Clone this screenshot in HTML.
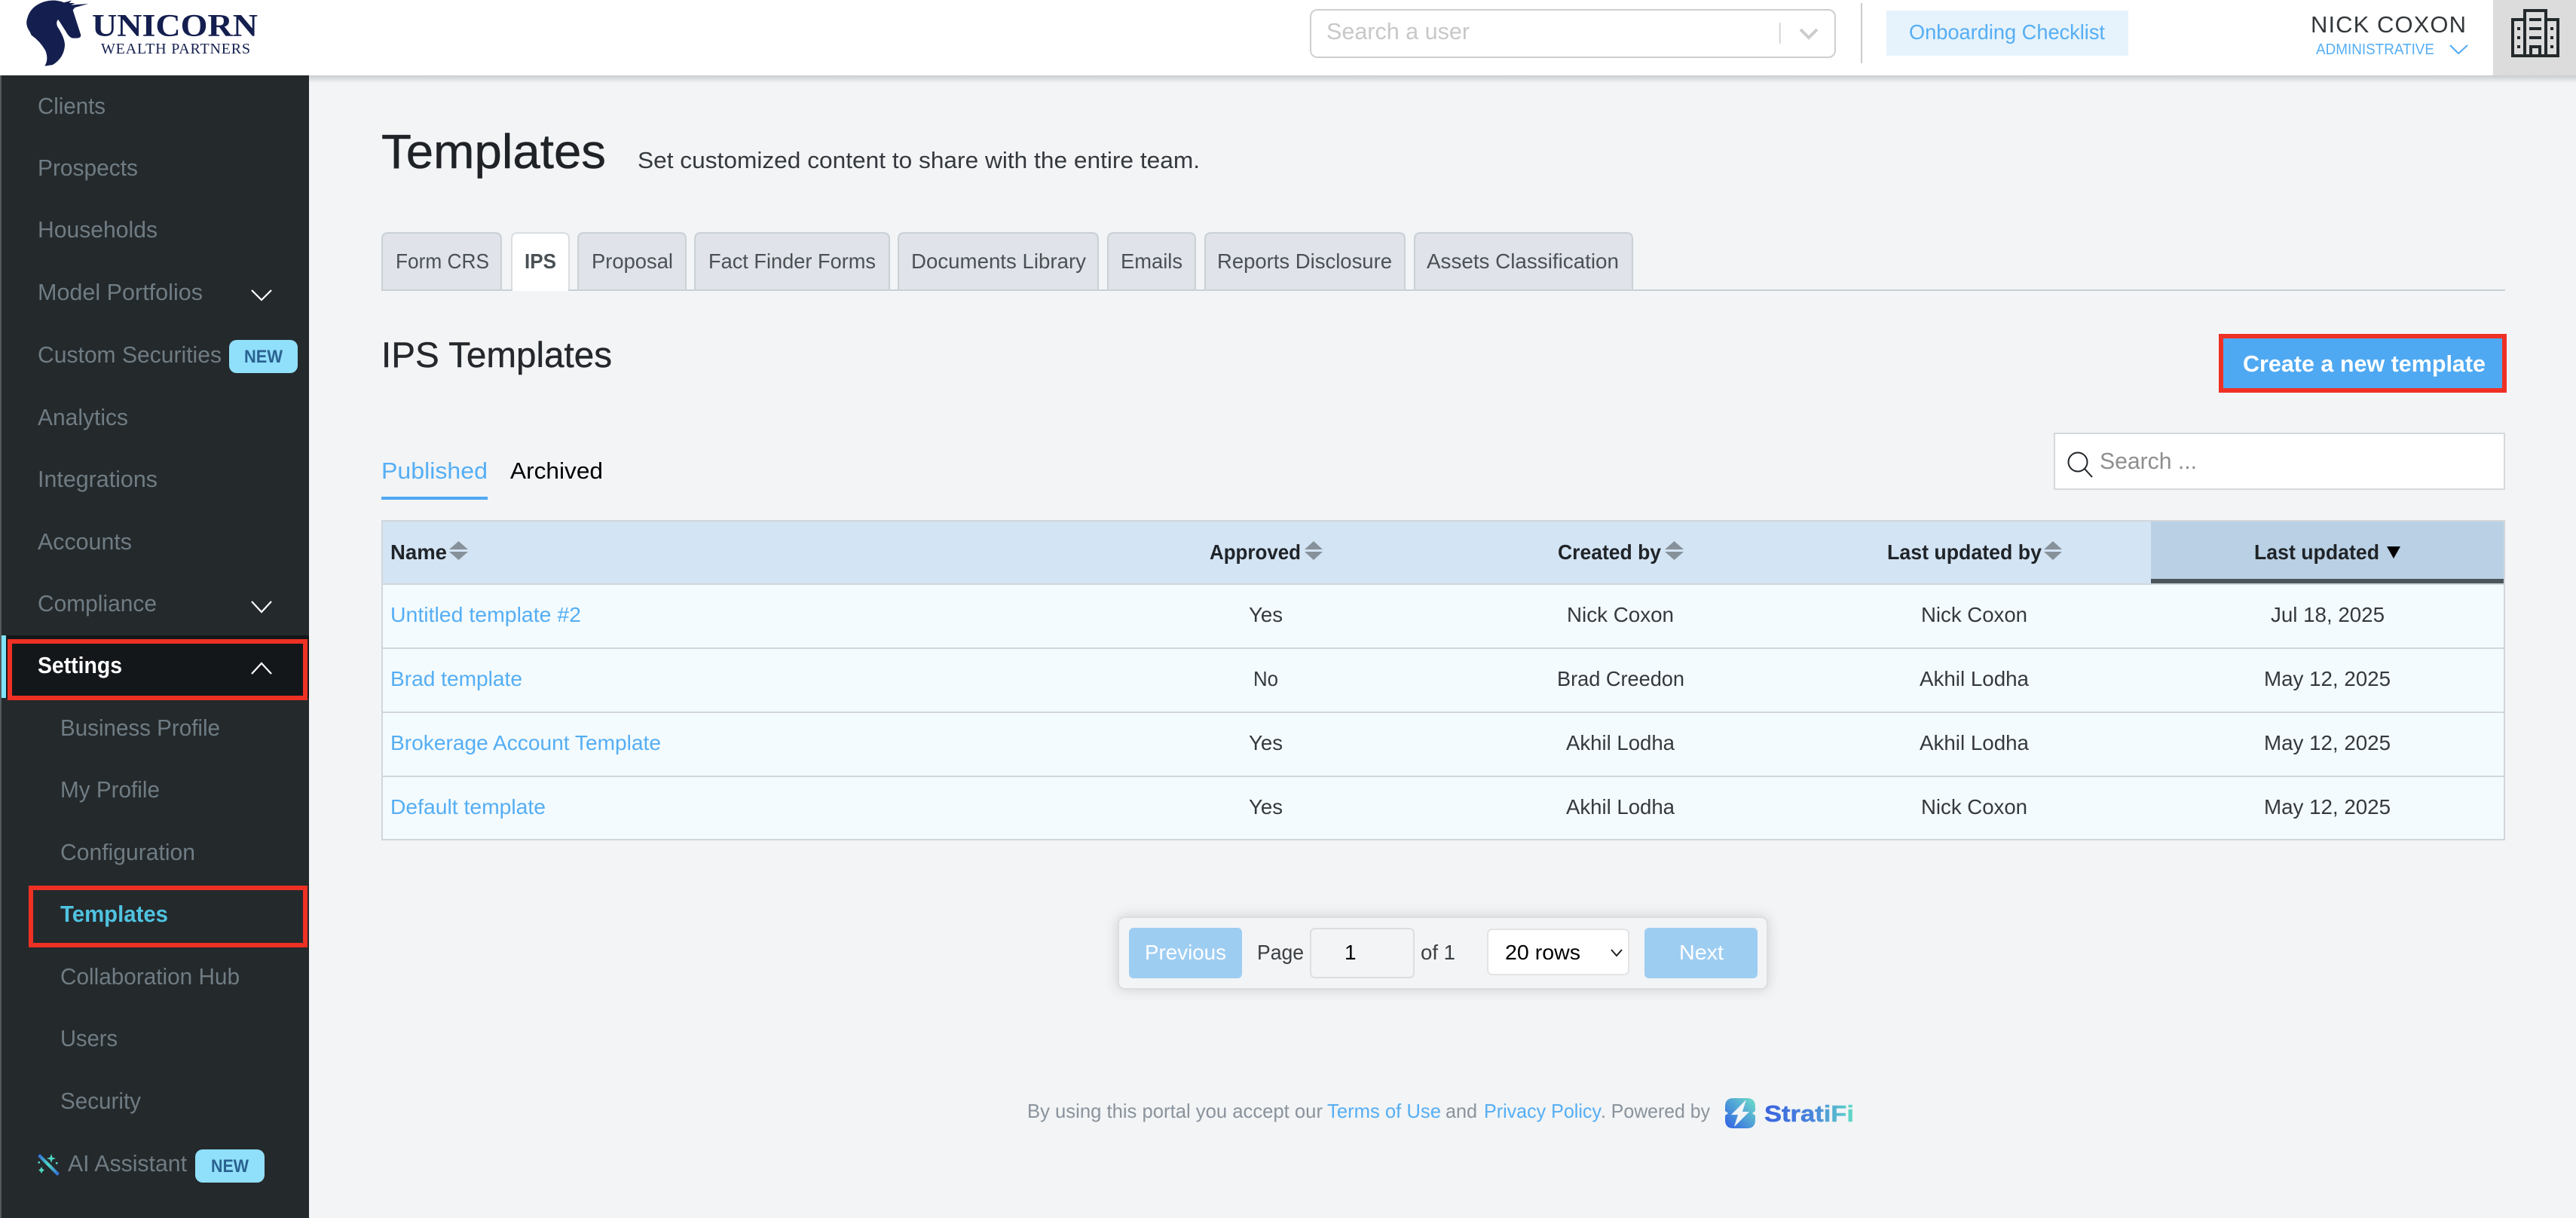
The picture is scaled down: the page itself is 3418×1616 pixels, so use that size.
<!DOCTYPE html>
<html lang="en"><head><meta charset="utf-8"><title>Templates</title>
<style>
html,body{margin:0;padding:0;background:#f2f4f6;width:3418px;height:1616px;overflow:hidden}
svg{display:block}
text{font-family:"Liberation Sans",Arial,sans-serif;white-space:pre}
.nav{font-size:31px;fill:#6f7c83}
.tab{font-size:28px;fill:#4a5155}
.th{font-size:28px;font-weight:700;fill:#202428}
.td{font-size:28px;fill:#35393d}
.lk{font-size:28px;fill:#55aef4}
.pg{font-size:28px}
.ft{font-size:26px;fill:#8a939c}
.ftl{font-size:26px;fill:#55aef4}
</style></head><body>
<svg xmlns="http://www.w3.org/2000/svg" width="3418" height="1616" viewBox="0 0 3418 1616">
<defs>
<linearGradient id="hs" x1="0" y1="0" x2="0" y2="1"><stop offset="0" stop-color="#c9cccf"/><stop offset="1" stop-color="#f2f4f6"/></linearGradient>
<linearGradient id="sf" x1="0" y1="1" x2="1" y2="0"><stop offset="0" stop-color="#2f5fe6"/><stop offset="1" stop-color="#6fe0c8"/></linearGradient>
<linearGradient id="sft" gradientUnits="userSpaceOnUse" x1="2341" y1="0" x2="2460" y2="0"><stop offset="0" stop-color="#3a62e0"/><stop offset=".55" stop-color="#4a86dc"/><stop offset="1" stop-color="#62dcc6"/></linearGradient>
<linearGradient id="wd" gradientUnits="userSpaceOnUse" x1="50" y1="1531" x2="79" y2="1559"><stop offset="0" stop-color="#2f62d8"/><stop offset=".5" stop-color="#4fd8c4"/><stop offset="1" stop-color="#2f62d8"/></linearGradient>
<filter id="ps" x="-5%" y="-40%" width="110%" height="180%"><feGaussianBlur stdDeviation="9"/></filter>
</defs>

<rect width="3418" height="1616" fill="#f2f4f6"/>

<!-- top bar shadow -->
<rect x="410" y="100" width="3008" height="10" fill="url(#hs)"/>

<!-- sidebar -->
<rect x="0" y="100" width="410" height="1516" fill="#24292c"/>
<rect x="0" y="100" width="2" height="1516" fill="#53595d"/>
<rect x="2" y="843" width="408" height="83" fill="#14171a"/>
<rect x="2" y="843" width="6" height="83" fill="#7fe3fb"/>

<text class="nav" x="50" y="151" textLength="90" lengthAdjust="spacingAndGlyphs">Clients</text>
<text class="nav" x="50" y="233" textLength="133" lengthAdjust="spacingAndGlyphs">Prospects</text>
<text class="nav" x="50" y="315" textLength="159" lengthAdjust="spacingAndGlyphs">Households</text>
<text class="nav" x="50" y="398" textLength="219" lengthAdjust="spacingAndGlyphs">Model Portfolios</text>
<text class="nav" x="50" y="481" textLength="244" lengthAdjust="spacingAndGlyphs">Custom Securities</text>
<text class="nav" x="50" y="564" textLength="120" lengthAdjust="spacingAndGlyphs">Analytics</text>
<text class="nav" x="50" y="646" textLength="159" lengthAdjust="spacingAndGlyphs">Integrations</text>
<text class="nav" x="50" y="729" textLength="125" lengthAdjust="spacingAndGlyphs">Accounts</text>
<text class="nav" x="50" y="811" textLength="158" lengthAdjust="spacingAndGlyphs">Compliance</text>
<text x="50" y="893" font-size="31" font-weight="700" fill="#fff" textLength="112" lengthAdjust="spacingAndGlyphs">Settings</text>
<text class="nav" x="80" y="976" textLength="212" lengthAdjust="spacingAndGlyphs">Business Profile</text>
<text class="nav" x="80" y="1058" textLength="132" lengthAdjust="spacingAndGlyphs">My Profile</text>
<text class="nav" x="80" y="1141" textLength="179" lengthAdjust="spacingAndGlyphs">Configuration</text>
<text x="80" y="1223" font-size="31" font-weight="700" fill="#4fc3e0" textLength="143" lengthAdjust="spacingAndGlyphs">Templates</text>
<text class="nav" x="80" y="1306" textLength="238" lengthAdjust="spacingAndGlyphs">Collaboration Hub</text>
<text class="nav" x="80" y="1388" textLength="76" lengthAdjust="spacingAndGlyphs">Users</text>
<text class="nav" x="80" y="1471" textLength="107" lengthAdjust="spacingAndGlyphs">Security</text>
<text class="nav" x="90" y="1554" textLength="158" lengthAdjust="spacingAndGlyphs">AI Assistant</text>

<!-- chevrons -->
<g fill="none" stroke="#fff" stroke-width="2.2">
<path d="M334 385 L347 398 L360 385"/>
<path d="M334 798 L347 812 L360 798"/>
<path d="M334 894 L347 880 L360 894"/>
</g>

<!-- badges -->
<rect x="304" y="451" width="91" height="44" rx="10" fill="#90dffb"/>
<text x="324" y="481" font-size="24" font-weight="700" fill="#2a6290" textLength="51" lengthAdjust="spacingAndGlyphs">NEW</text>
<rect x="259" y="1525" width="92" height="44" rx="10" fill="#90dffb"/>
<text x="280" y="1555" font-size="24" font-weight="700" fill="#2a6290" textLength="50" lengthAdjust="spacingAndGlyphs">NEW</text>

<!-- AI wand -->
<path d="M50 1534 L53 1531 L79 1557 L76 1560 Z" fill="url(#wd)"/>
<g fill="#4fd8c4">
<path d="M68 1531 L69.500 1535.500 L74 1537 L69.500 1538.500 L68 1543 L66.500 1538.500 L62 1537 L66.500 1535.500 Z"/>
<path d="M55 1548 L56.500 1551 L59 1552.500 L56.500 1554 L55 1557 L53.500 1554 L51 1552.500 L53.500 1551 Z"/>
<rect x="50.500" y="1541" width="2.500" height="2.500"/><rect x="74" y="1542" width="2.500" height="2.500"/>
</g>

<!-- red highlight boxes -->
<rect x="13" y="851" width="392" height="75" fill="none" stroke="#ee3124" stroke-width="6"/>
<rect x="41" y="1178" width="364" height="76" fill="none" stroke="#ee3124" stroke-width="6"/>

<!-- header -->
<rect x="0" y="0" width="3418" height="100" fill="#fff"/>
<g transform="scale(.33333)">
<path fill="#141f4f" d="M352 15 L298 30 L290 40 L322 140 Q322 152 305 152 L290 152 Q275 150 262 125 L232 78 Q222 85 228 105 Q258 150 258 180 Q255 230 210 258 L178 263 Q195 235 180 200 Q160 165 125 140 L118 125 Q100 100 108 75 Q120 25 175 7 Q215 -5 255 10 L285 2 L275 12 L298 12 L283 20 Z"/>
</g>
<text x="122" y="48" font-size="42" font-weight="700" fill="#141f4f" style="font-family:'Liberation Serif',serif" textLength="220" lengthAdjust="spacingAndGlyphs">UNICORN</text>
<text x="134" y="71" font-size="20" fill="#141f4f" style="font-family:'Liberation Serif',serif" textLength="198" lengthAdjust="spacing">WEALTH PARTNERS</text>

<rect x="1739" y="13" width="696" height="63" rx="9" fill="#fff" stroke="#cfcfcf" stroke-width="2"/>
<text x="1760" y="52" font-size="31" fill="#c8c8c8" textLength="190" lengthAdjust="spacingAndGlyphs">Search a user</text>
<rect x="2361" y="30" width="1.500" height="28" fill="#ccc"/>
<path d="M2389 39 L2400 50 L2411 39" fill="none" stroke="#ccc" stroke-width="4"/>
<rect x="2469" y="4" width="2" height="80" fill="#ccc"/>
<rect x="2503" y="14" width="321" height="60" fill="#e6f3fc"/>
<text x="2533" y="52" font-size="28" fill="#55aef4" textLength="260" lengthAdjust="spacingAndGlyphs">Onboarding Checklist</text>
<text x="3066" y="43" font-size="31" fill="#34383b" textLength="206" lengthAdjust="spacing">NICK COXON</text>
<text x="3073" y="72" font-size="20" fill="#55aef4" textLength="157" lengthAdjust="spacingAndGlyphs">ADMINISTRATIVE</text>
<path d="M3251 60 L3262 71 L3274 60" fill="none" stroke="#4fa9f2" stroke-width="2"/>

<rect x="3308" y="0" width="110" height="100" fill="#dcdcdc"/>
<g transform="translate(3310 0)" fill="#24292c">
<path fill-rule="evenodd" d="M38 12 H70 V24 H86 V76 H22 V24 H38 Z M42 16 V72 H46 V60 H62 V72 H66 V16 Z M26 28 V72 H38 V28 Z M70 28 V72 H82 V28 Z M50 64 V72 H58 V64 Z"/>
<rect x="46" y="24" width="16" height="4"/><rect x="46" y="36" width="16" height="4"/><rect x="46" y="48" width="16" height="4"/>
<rect x="30" y="36" width="4" height="4"/><rect x="30" y="48" width="4" height="4"/><rect x="30" y="60" width="4" height="4"/>
<rect x="74" y="36" width="4" height="4"/><rect x="74" y="48" width="4" height="4"/><rect x="74" y="60" width="4" height="4"/>
</g>

<!-- title -->
<text x="506" y="223" font-size="64" fill="#1f2327" stroke="#1f2327" stroke-width=".5" textLength="298" lengthAdjust="spacingAndGlyphs">Templates</text>
<text x="846" y="223" font-size="31" fill="#35393d" textLength="746" lengthAdjust="spacingAndGlyphs">Set customized content to share with the entire team.</text>

<!-- tabs -->
<g fill="#e0e3e9" stroke="#c9d1d5" stroke-width="2">
<path d="M507 385 V317 Q507 309 515 309 H657 Q665 309 665 317 V385"/>
<path fill="#fff" stroke="#d8dde0" d="M679 385 V317 Q679 309 687 309 H747 Q755 309 755 317 V385"/>
<path d="M767 385 V317 Q767 309 775 309 H902 Q910 309 910 317 V385"/>
<path d="M922 385 V317 Q922 309 930 309 H1172 Q1180 309 1180 317 V385"/>
<path d="M1192 385 V317 Q1192 309 1200 309 H1449 Q1457 309 1457 317 V385"/>
<path d="M1470 385 V317 Q1470 309 1478 309 H1578 Q1586 309 1586 317 V385"/>
<path d="M1599 385 V317 Q1599 309 1607 309 H1856 Q1864 309 1864 317 V385"/>
<path d="M1877 385 V317 Q1877 309 1885 309 H2158 Q2166 309 2166 317 V385"/>
</g>
<rect x="506" y="384" width="2818" height="2" fill="#c9d1d5"/>
<rect x="680" y="384" width="74" height="2" fill="#fff"/>
<text class="tab" x="525" y="356" textLength="124" lengthAdjust="spacingAndGlyphs">Form CRS</text>
<text class="tab" x="696" y="356" font-weight="700" textLength="42" lengthAdjust="spacingAndGlyphs">IPS</text>
<text class="tab" x="785" y="356" textLength="108" lengthAdjust="spacingAndGlyphs">Proposal</text>
<text class="tab" x="940" y="356" textLength="222" lengthAdjust="spacingAndGlyphs">Fact Finder Forms</text>
<text class="tab" x="1209" y="356" textLength="232" lengthAdjust="spacingAndGlyphs">Documents Library</text>
<text class="tab" x="1487" y="356" textLength="82" lengthAdjust="spacingAndGlyphs">Emails</text>
<text class="tab" x="1615" y="356" textLength="232" lengthAdjust="spacingAndGlyphs">Reports Disclosure</text>
<text class="tab" x="1893" y="356" textLength="255" lengthAdjust="spacingAndGlyphs">Assets Classification</text>

<text x="506" y="487" font-size="47" fill="#24272b" stroke="#24272b" stroke-width=".4" textLength="306" lengthAdjust="spacingAndGlyphs">IPS Templates</text>

<!-- create button -->
<rect x="2947" y="446" width="376" height="72" fill="#4fa9f2" stroke="#ee3124" stroke-width="6"/>
<text x="2976" y="493" font-size="31" font-weight="700" fill="#fff" textLength="322" lengthAdjust="spacingAndGlyphs">Create a new template</text>

<!-- sub tabs -->
<text x="506" y="635" font-size="31" fill="#55aef4" textLength="141" lengthAdjust="spacingAndGlyphs">Published</text>
<rect x="506" y="659" width="141" height="4" fill="#4fa9f2"/>
<text x="677" y="635" font-size="31" fill="#000" textLength="123" lengthAdjust="spacingAndGlyphs">Archived</text>

<!-- search -->
<rect x="2726" y="575" width="597" height="74" fill="#fff" stroke="#d5d8dc" stroke-width="2"/>
<circle cx="2757" cy="613" r="12.500" fill="none" stroke="#1f2327" stroke-width="2"/>
<path d="M2766 622 L2776 633" fill="none" stroke="#1f2327" stroke-width="2"/>
<text x="2786" y="622" font-size="31" fill="#8e8e8e" textLength="129" lengthAdjust="spacingAndGlyphs">Search ...</text>

<!-- table -->
<rect x="506" y="690" width="2817" height="425" fill="#f4fbfe"/>
<rect x="507" y="692" width="2815" height="82" fill="#d3e4f4"/>
<rect x="2854" y="692" width="468" height="76" fill="#bad1e5"/>
<rect x="2854" y="768" width="468" height="6" fill="#4a565c"/>
<g fill="#d2d6da">
<rect x="506" y="690" width="2817" height="2"/>
<rect x="506" y="774" width="2817" height="2"/>
<rect x="506" y="859" width="2817" height="2"/>
<rect x="506" y="944" width="2817" height="2"/>
<rect x="506" y="1029" width="2817" height="2"/>
<rect x="506" y="1113" width="2817" height="2"/>
<rect x="506" y="690" width="2" height="425"/>
<rect x="3322" y="690" width="2" height="425"/>
</g>

<text class="th" x="518" y="742" textLength="75" lengthAdjust="spacingAndGlyphs">Name</text>
<text class="th" x="1605" y="742" textLength="121" lengthAdjust="spacingAndGlyphs">Approved</text>
<text class="th" x="2067" y="742" textLength="137" lengthAdjust="spacingAndGlyphs">Created by</text>
<text class="th" x="2504" y="742" textLength="205" lengthAdjust="spacingAndGlyphs">Last updated by</text>
<text class="th" x="2991" y="742" textLength="166" lengthAdjust="spacingAndGlyphs">Last updated</text>
<g fill="#87919a">
<path d="M608.500 718 L621 729 H596 Z M596 732 H621 L608.500 743 Z"/>
<path d="M1743 718 L1755 729 H1731 Z M1731 732 H1755 L1743 743 Z"/>
<path d="M2221.500 718 L2234 729 H2209 Z M2209 732 H2234 L2221.500 743 Z"/>
<path d="M2724 718 L2736 729 H2712 Z M2712 732 H2736 L2724 743 Z"/>
</g>
<path d="M3167 725 H3185 L3176 741 Z" fill="#000"/>

<text class="lk" x="518" y="825" textLength="253" lengthAdjust="spacingAndGlyphs">Untitled template #2</text>
<text class="td" x="1657" y="825" textLength="45" lengthAdjust="spacingAndGlyphs">Yes</text>
<text class="td" x="2079" y="825" textLength="142" lengthAdjust="spacingAndGlyphs">Nick Coxon</text>
<text class="td" x="2549" y="825" textLength="141" lengthAdjust="spacingAndGlyphs">Nick Coxon</text>
<text class="td" x="3013" y="825" textLength="151" lengthAdjust="spacingAndGlyphs">Jul 18, 2025</text>

<text class="lk" x="518" y="910" textLength="175" lengthAdjust="spacingAndGlyphs">Brad template</text>
<text class="td" x="1663" y="910" textLength="33" lengthAdjust="spacingAndGlyphs">No</text>
<text class="td" x="2066" y="910" textLength="169" lengthAdjust="spacingAndGlyphs">Brad Creedon</text>
<text class="td" x="2547" y="910" textLength="145" lengthAdjust="spacingAndGlyphs">Akhil Lodha</text>
<text class="td" x="3004" y="910" textLength="168" lengthAdjust="spacingAndGlyphs">May 12, 2025</text>

<text class="lk" x="518" y="995" textLength="359" lengthAdjust="spacingAndGlyphs">Brokerage Account Template</text>
<text class="td" x="1657" y="995" textLength="45" lengthAdjust="spacingAndGlyphs">Yes</text>
<text class="td" x="2078" y="995" textLength="144" lengthAdjust="spacingAndGlyphs">Akhil Lodha</text>
<text class="td" x="2547" y="995" textLength="145" lengthAdjust="spacingAndGlyphs">Akhil Lodha</text>
<text class="td" x="3004" y="995" textLength="168" lengthAdjust="spacingAndGlyphs">May 12, 2025</text>

<text class="lk" x="518" y="1080" textLength="206" lengthAdjust="spacingAndGlyphs">Default template</text>
<text class="td" x="1657" y="1080" textLength="45" lengthAdjust="spacingAndGlyphs">Yes</text>
<text class="td" x="2078" y="1080" textLength="144" lengthAdjust="spacingAndGlyphs">Akhil Lodha</text>
<text class="td" x="2549" y="1080" textLength="141" lengthAdjust="spacingAndGlyphs">Nick Coxon</text>
<text class="td" x="3004" y="1080" textLength="168" lengthAdjust="spacingAndGlyphs">May 12, 2025</text>

<!-- pagination -->
<rect x="1483" y="1216" width="863" height="97" rx="8" fill="#000" opacity=".14" filter="url(#ps)"/>
<rect x="1484" y="1217" width="861" height="95" rx="8" fill="#f2f4f6" stroke="#dcdee0" stroke-width="2"/>
<rect x="1498" y="1231" width="150" height="67" rx="6" fill="#9ecdf2"/>
<text class="pg" x="1519" y="1273" fill="#fff" textLength="108" lengthAdjust="spacingAndGlyphs">Previous</text>
<text class="pg" x="1668" y="1273" fill="#3c4043" textLength="62" lengthAdjust="spacingAndGlyphs">Page</text>
<rect x="1739" y="1232" width="137" height="65" rx="6" fill="#f2f4f6" stroke="#dcdee0" stroke-width="2"/>
<text class="pg" x="1784" y="1273" fill="#000">1</text>
<text class="pg" x="1885" y="1273" fill="#3c4043" textLength="46" lengthAdjust="spacingAndGlyphs">of 1</text>
<rect x="1974" y="1233" width="187" height="60" rx="6" fill="#fff" stroke="#e4e4e4" stroke-width="2"/>
<text class="pg" x="1997" y="1273" fill="#000" textLength="100" lengthAdjust="spacingAndGlyphs">20 rows</text>
<path d="M2138 1260 L2145 1268 L2152 1260" fill="none" stroke="#222" stroke-width="2"/>
<rect x="2182" y="1231" width="150" height="67" rx="6" fill="#9ecdf2"/>
<text class="pg" x="2228" y="1273" fill="#fff" textLength="59" lengthAdjust="spacingAndGlyphs">Next</text>

<!-- footer -->
<text class="ft" x="1363" y="1483" textLength="392" lengthAdjust="spacingAndGlyphs">By using this portal you accept our</text>
<text class="ftl" x="1761" y="1483" textLength="151" lengthAdjust="spacingAndGlyphs">Terms of Use</text>
<text class="ft" x="1918" y="1483" textLength="42" lengthAdjust="spacingAndGlyphs">and</text>
<text class="ftl" x="1969" y="1483" textLength="156" lengthAdjust="spacingAndGlyphs">Privacy Policy</text>
<text class="ft" x="2124" y="1483" textLength="145" lengthAdjust="spacingAndGlyphs">. Powered by</text>
<path fill="url(#sf)" d="M2306 1457 H2318 Q2329 1457 2329 1468 V1474 L2325 1477 L2329 1480 V1486 Q2329 1497 2318 1497 H2300 Q2289 1497 2289 1486 V1480 L2293 1477 L2289 1474 V1468 Q2289 1457 2300 1457 Z"/>
<path d="M2317 1459 L2297 1479 H2306 L2301 1495 L2321 1475 H2312 Z" fill="#f2f4f6"/>
<text x="2341" y="1488" font-size="31" font-weight="700" fill="url(#sft)" stroke="url(#sft)" stroke-width=".5" textLength="119" lengthAdjust="spacingAndGlyphs">StratiFi</text>
</svg>
</body></html>
